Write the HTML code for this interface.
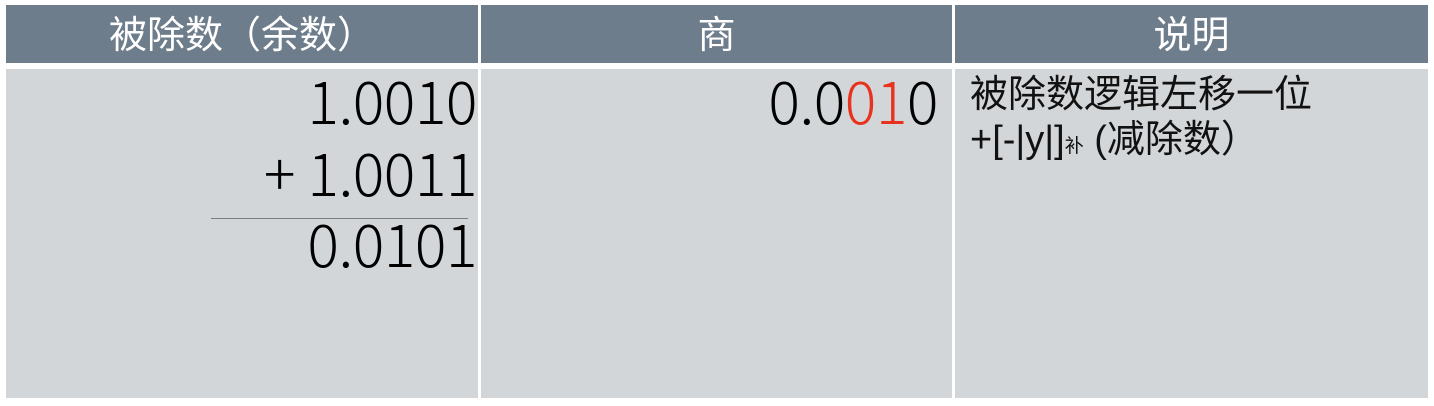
<html><head><style>
body{margin:0;width:1434px;height:406px;background:#fff;position:relative;overflow:hidden;font-family:"Liberation Sans","Noto Sans CJK SC",sans-serif}
.h{position:absolute;top:5px;height:58px;background:#6e7d8b;color:#fff;font-size:38px;line-height:54px;text-align:center;font-family:"Noto Sans CJK SC",sans-serif}
.b{position:absolute;top:69px;height:329px;background:#d3d6d9}
.n{position:absolute;right:0;font-size:59px;color:#000;line-height:1;font-family:"Noto Sans CJK SC","Liberation Sans",sans-serif;font-weight:300;letter-spacing:-0.5px}
</style></head><body>
<div class="h" style="left:6px;width:472px">被除数（余数）</div>
<div class="h" style="left:481px;width:471px">商</div>
<div class="h" style="left:955px;width:473px">说明</div>
<div class="b" style="left:6px;width:472px">
<div class="n" style="top:0px;right:1px">1.0010</div>
<div class="n" style="top:72px;right:1px">+ 1.0011</div>
<div style="position:absolute;left:205px;width:257px;top:149px;height:1px;background:#7a7f84"></div>
<div class="n" style="top:143px;right:1px">0.0101</div>
</div>
<div class="b" style="left:481px;width:471px">
<div class="n" style="top:0px;right:14px">0.0<span style="color:#e8321e">01</span>0</div>
</div>
<div class="b" style="left:955px;width:473px;font-size:38px;color:#111;line-height:45px;font-family:'Liberation Sans','Noto Sans CJK SC',sans-serif">
<div style="position:absolute;left:15px;top:4px;white-space:nowrap">被除数逻辑左移一位<br>+[-|y|]<span style="font-size:19px">补</span> (减除数）</div>
</div>
</body></html>
